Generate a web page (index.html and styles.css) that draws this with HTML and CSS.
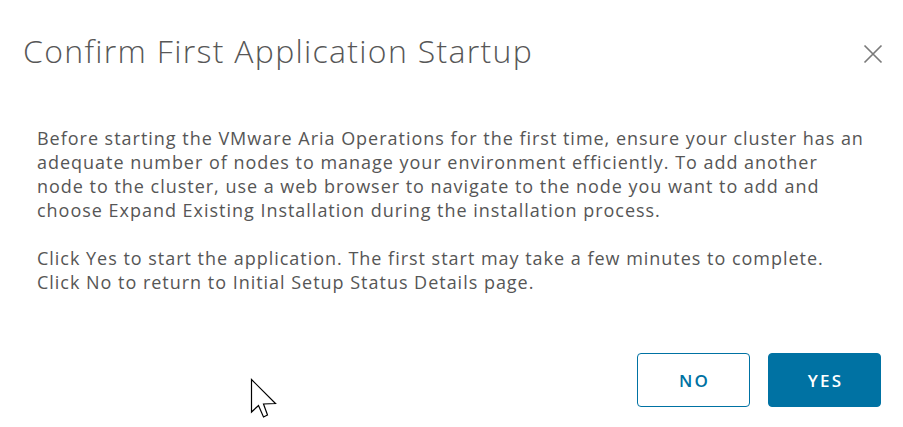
FILE: index.html
```html
<!DOCTYPE html>
<html>
<head>
<meta charset="utf-8">
<link rel="stylesheet" href="styles.css">
</head>
<body>
<div class="modal">
  <header class="modal-header">
    <h3 class="modal-title">Confirm First Application Startup</h3>
    <button class="close" aria-label="Close">
      <svg width="20" height="20" viewBox="0 0 20 20"><path d="M1.5 1.5 L18.5 18.5 M18.5 1.5 L1.5 18.5" stroke="#7a7a7a" stroke-width="1.7" fill="none"/></svg>
    </button>
  </header>
  <div class="modal-body">
    <p>Before starting the VMware Aria Operations for the first time, ensure your cluster has an<br>adequate number of nodes to manage your environment efficiently. To add another<br>node to the cluster, use a web browser to navigate to the node you want to add and<br>choose Expand Existing Installation during the installation process.</p>
    <p>Click Yes to start the application. The first start may take a few minutes to complete.<br>Click No to return to Initial Setup Status Details page.</p>
  </div>
  <footer class="modal-footer">
    <button class="btn btn-outline">NO</button>
    <button class="btn btn-primary">YES</button>
  </footer>
</div>
<svg class="cursor" width="28" height="42" viewBox="0 0 28 42"><path d="M1.5 1.5 L1.5 34 L8.5 27.5 L13.5 39 L17.5 37 L13.5 26 L25.5 25.5 Z" fill="#fff" stroke="#000" stroke-width="1.2" stroke-linejoin="miter"/></svg>
</body>
</html>
```
FILE: styles.css
```css
html, body {
  margin: 0;
  padding: 0;
  background: #fff;
}
body {
  width: 903px;
  height: 427px;
  overflow: hidden;
  position: relative;
  font-family: "Open Sans", "Noto Sans", sans-serif;
  color: #565656;
}
.modal {
  padding: 0 23px;
}
.modal-header {
  display: flex;
  align-items: flex-start;
  justify-content: space-between;
  padding-top: 29px;
}
.modal-title {
  margin: 0;
  font-family: "Open Sans", sans-serif;
  font-weight: 300;
  font-size: 32px;
  line-height: 44px;
  color: #575757;
  letter-spacing: 1.3px;
}
.close {
  border: 0;
  background: none;
  padding: 0;
  margin: 15px -3px 0 0;
  width: 20px;
  height: 20px;
  display: flex;
}
.modal-body {
  padding: 53px 0 0 14px;
}
.modal-body p {
  margin: 0 0 24px 0;
  font-size: 18px;
  line-height: 24px;
  letter-spacing: 0.98px;
}
.modal-body p:last-child {
  margin-bottom: 0;
}
.modal-footer {
  display: flex;
  justify-content: flex-end;
  gap: 18px;
  padding-top: 59px;
  margin-right: -1px;
}
.btn {
  width: 113px;
  height: 54px;
  border-radius: 4px;
  font-family: "Open Sans", sans-serif;
  font-weight: 600;
  font-size: 17px;
  letter-spacing: 2.2px;
  padding: 0 0 0 2px;
  cursor: pointer;
}
.btn-outline {
  background: #fff;
  border: 1px solid #0072a3;
  color: #0072a3;
}
.btn-primary {
  background: #0072a3;
  border: 1px solid #0072a3;
  color: #fff;
}
.cursor {
  position: absolute;
  left: 250px;
  top: 378px;
}
```
